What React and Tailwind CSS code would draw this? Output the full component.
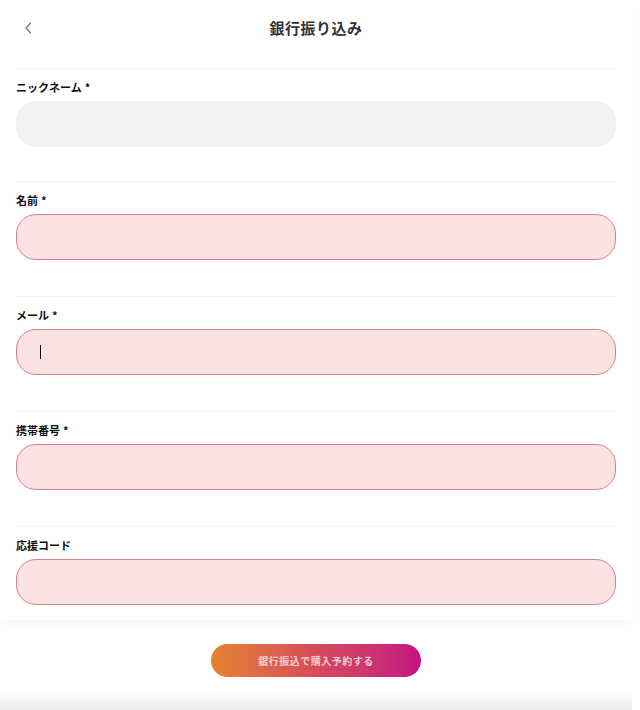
import React from "react";

const font = { fontFamily: '"Noto Sans CJK JP", "Noto Sans", sans-serif' };

function Field({ label, required, variant, cursor, first }) {
  const base =
    variant === "gray"
      ? "bg-[#f2f2f2] border border-[#f2f2f2]"
      : "bg-[#fde2e3] border border-[#d98088]";
  return (
    <div className={`border-t border-[#f4f4f4] pt-[11px] ${first ? "pb-[34px]" : "pb-[36px]"}`}>
      <div className="h-[14px] mb-[7px] flex items-center text-[11px] font-bold text-[#111] leading-none">
        {label}
        {required && <span className="ml-[3px]">*</span>}
      </div>
      <div className={`h-[46px] rounded-[20px] ${base} flex items-center pl-[23px]`}>
        {cursor && <div className="w-px h-[14px] bg-black" />}
      </div>
    </div>
  );
}

export default function App() {
  return (
    <div className="w-[640px] h-[710px] bg-white flex flex-col overflow-hidden" style={font}>
      <div className="w-[632px] flex-1 flex flex-col min-h-0 shadow-[0_8px_12px_-6px_rgba(0,0,0,0.06)] relative">
        <div className="h-[68px] flex items-center relative shrink-0">
          <div className="absolute left-[22px] top-[21px]">
            <svg width="12" height="14" viewBox="0 0 12 14" fill="none">
              <path d="M8.5 2 L4 7 L8.5 12" stroke="#777" strokeWidth="1.2" strokeLinecap="round" strokeLinejoin="round" />
            </svg>
          </div>
          <div className="flex-1 text-center text-[15px] font-bold text-[#333] -mt-[12px] tracking-[0.5px]">
            銀行振り込み
          </div>
        </div>
        <div className="px-[16px] flex flex-col">
          <Field label="ニックネーム" required variant="gray" first />
          <Field label="名前" required variant="pink" />
          <Field label="メール" required variant="pink" cursor />
          <Field label="携帯番号" required variant="pink" />
          <div className="border-t border-[#f4f4f4] pt-[11px]">
            <div className="h-[14px] mb-[7px] flex items-center text-[11px] font-bold text-[#111] leading-none">
              応援コード
            </div>
            <div className="h-[46px] rounded-[20px] bg-[#fde2e3] border border-[#d98088]" />
          </div>
        </div>
      </div>
      <div className="w-[632px] h-[90px] shrink-0 bg-gradient-to-b from-white from-80% to-[#ececec] flex justify-center pt-[24px]">
        <button className="w-[210px] h-[33px] rounded-full bg-gradient-to-r from-[#e5822a] via-[#d64a5a] to-[#c30f82] text-[10px] font-bold text-[#f7cdd3] tracking-[0.5px]">
          銀行振込で購入予約する
        </button>
      </div>
    </div>
  );
}
